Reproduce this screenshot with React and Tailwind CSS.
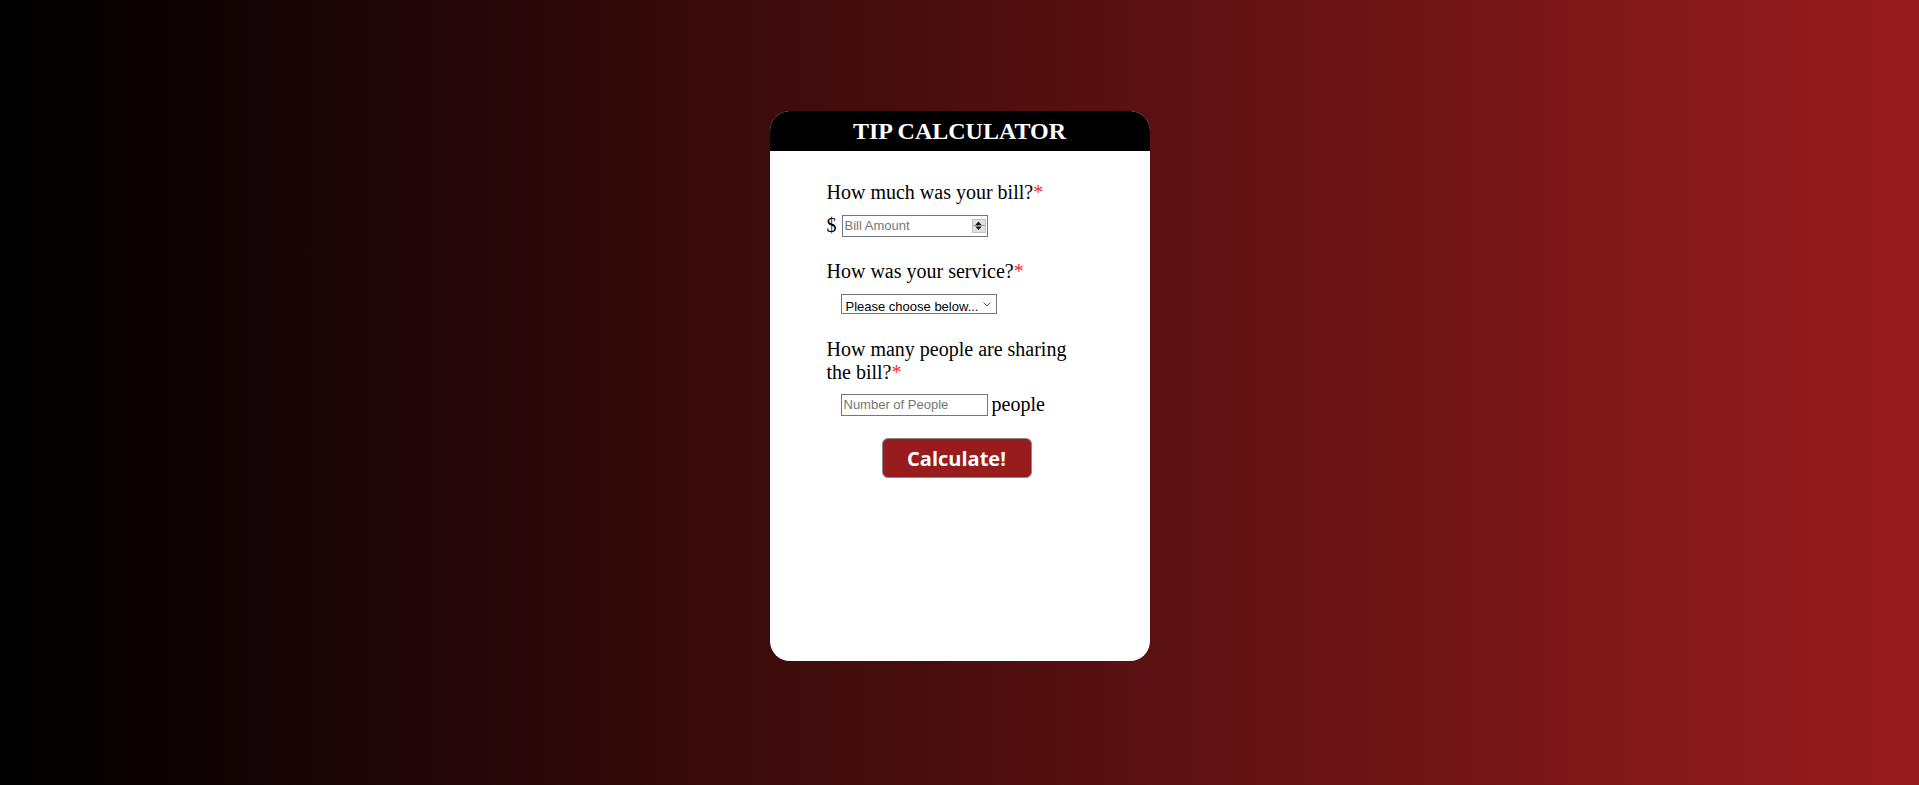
import React, { useState } from "react";

const serif = { fontFamily: '"Liberation Serif", "Times New Roman", serif' };
const sans = { fontFamily: '"Liberation Sans", Arial, sans-serif' };

const Req = () => <span className="text-[#ff2a2a]">*</span>;

function Spinner() {
  return (
    <div className="w-[14px] h-[14px] bg-[#e1e1e1] border border-[#c4c4c4] flex flex-col items-center justify-between mr-[1px]">
      <svg width="7" height="5" viewBox="0 0 7 5" className="mt-[1px]"><path d="M0 4.5 L3.5 0.5 L7 4.5 Z" fill="#111" /></svg>
      <div className="w-full h-px bg-[#9a9a9a]" />
      <svg width="7" height="5" viewBox="0 0 7 5" className="mb-[1px]"><path d="M0 0.5 L3.5 4.5 L7 0.5 Z" fill="#111" /></svg>
    </div>
  );
}

export default function App() {
  const [bill, setBill] = useState("");
  const [service, setService] = useState("");
  const [people, setPeople] = useState("");

  return (
    <div className="min-h-screen h-[785px] w-full bg-linear-to-r/srgb from-black to-[#981c1e] pt-[111px]">
      <div className="mx-auto w-[380px] h-[550px] bg-white rounded-[20px] overflow-hidden" style={serif}>
        <div className="h-[40px] bg-black flex items-center justify-center">
          <h1 className="text-white text-[24px] font-bold leading-none">TIP CALCULATOR</h1>
        </div>

        <div className="w-[266px] mx-auto pt-[30px] text-[20px] leading-[23px] text-black">
          <p>How much was your bill?<Req /></p>
          <div className="flex items-center mt-[10px]">
            <span className="mr-[5px]">$</span>
            <div className="w-[146px] h-[22px] border border-[#767676] flex items-center">
              <input
                type="text"
                value={bill}
                onChange={(e) => setBill(e.target.value)}
                placeholder="Bill Amount"
                className="flex-1 min-w-0 h-full px-[2px] text-[13px] outline-none placeholder:text-[#757575]"
                style={sans}
              />
              <Spinner />
            </div>
          </div>

          <p className="mt-[23px]">How was your service?<Req /></p>
          <div className="mt-[11px] ml-[14px]">
            <div className="relative w-[156px] h-[20px] border border-[#767676] flex items-center">
              <select
                value={service}
                onChange={(e) => setService(e.target.value)}
                className="appearance-none w-full h-full pl-[4px] pr-[16px] text-[13px] bg-white outline-none"
                style={sans}
              >
                <option value="">Please choose below...</option>
                <option value="0.3">30% - Outstanding</option>
                <option value="0.2">20% - Good</option>
                <option value="0.15">15% - It was OK</option>
                <option value="0.1">10% - Bad</option>
                <option value="0.05">5% - Terrible</option>
              </select>
              <svg width="8" height="5" viewBox="0 0 8 5" className="absolute right-[5px] top-[7px] pointer-events-none">
                <path d="M0.5 0.5 L4 4 L7.5 0.5" fill="none" stroke="#555" strokeWidth="1" />
              </svg>
            </div>
          </div>

          <p className="mt-[24px]">How many people are sharing the bill?<Req /></p>
          <div className="flex items-center mt-[9px] ml-[14px]">
            <input
              type="text"
              value={people}
              onChange={(e) => setPeople(e.target.value)}
              placeholder="Number of People"
              className="w-[147px] h-[22px] border border-[#767676] px-[2px] text-[13px] outline-none placeholder:text-[#757575]"
              style={sans}
            />
            <span className="ml-[4px]">people</span>
          </div>

          <div className="flex justify-center mt-[22px] pr-[6px]">
            <button
              className="w-[150px] h-[40px] bg-[#981c1e] border border-[#8a8a8a] rounded-[6px] text-white text-[20px] font-bold"
              style={{ fontFamily: '"Open Sans", "DejaVu Sans", sans-serif' }}
            >
              Calculate!
            </button>
          </div>
        </div>
      </div>
    </div>
  );
}
